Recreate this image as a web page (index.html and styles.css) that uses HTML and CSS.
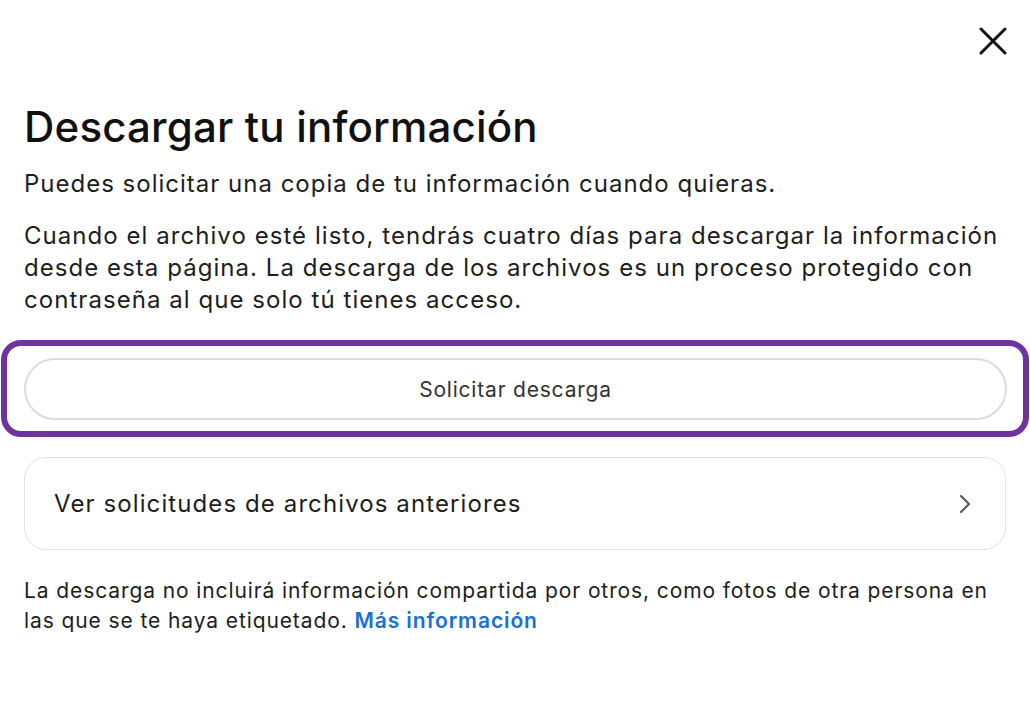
FILE: index.html
```html
<!DOCTYPE html>
<html lang="es">
<head>
<meta charset="utf-8">
<link rel="stylesheet" href="styles.css">
</head>
<body>
<div class="dialog">
  <div class="topbar">
    <button class="close" aria-label="Cerrar">
      <svg width="28" height="28" viewBox="0 0 28 28"><path d="M2 2 L26 26 M26 2 L2 26" stroke="#111" stroke-width="3" stroke-linecap="round" fill="none"/></svg>
    </button>
  </div>
  <h1 class="title">Descargar tu información</h1>
  <p class="lead">Puedes solicitar una copia de tu información cuando quieras.</p>
  <p class="body">Cuando el archivo esté listo, tendrás cuatro días para descargar la información desde esta página. La descarga de los archivos es un proceso protegido con contraseña al que solo tú tienes acceso.</p>
  <div class="highlight">
    <button class="pill">Solicitar descarga</button>
  </div>
  <div class="card">
    <span class="card-text">Ver solicitudes de archivos anteriores</span>
    <svg class="chev" width="14" height="22" viewBox="0 0 14 22"><path d="M3 3 L11 11 L3 19" stroke="#555" stroke-width="2" fill="none" stroke-linecap="round" stroke-linejoin="round"/></svg>
  </div>
  <p class="note">La descarga no incluirá información compartida por otros, como fotos de otra persona en las que se te haya etiquetado. <a class="link" href="#">Más información</a></p>
</div>
</body>
</html>
```
FILE: styles.css
```css
* { box-sizing: border-box; }
html, body { margin: 0; padding: 0; background: #fff; }
body {
  font-family: "Inter", "Noto Sans", sans-serif;
  color: #1c1e21;
}
.dialog {
  width: 1030px;
  height: 708px;
  padding: 0 24px;
  display: flex;
  flex-direction: column;
}
.topbar {
  display: flex;
  justify-content: flex-end;
  padding-top: 27px;
  margin-right: -1px;
}
.close {
  border: 0;
  background: none;
  padding: 0;
  width: 28px;
  height: 28px;
  display: flex;
  cursor: pointer;
}
.title {
  margin: 47px 0 0 0;
  font-size: 42px;
  font-weight: 500;
  line-height: 50px;
  letter-spacing: 0.2px;
  color: #111;
}
.lead {
  margin: 16px 0 0 0;
  font-size: 24px;
  line-height: 32px;
  letter-spacing: 1px;
}
.body {
  margin: 20px 0 0 0;
  font-size: 24px;
  line-height: 32px;
  letter-spacing: 1.05px;
}
.highlight {
  margin: 24px -23px 0 -23px;
  border: 6px solid #6f33a0;
  border-radius: 20px;
  padding: 12px 16px 11px 17px;
}
.pill {
  display: flex;
  align-items: center;
  justify-content: center;
  width: 100%;
  height: 62px;
  border: 2px solid #dcdcdc;
  border-radius: 31px;
  background: #fff;
  font-family: inherit;
  font-size: 21px;
  letter-spacing: 0.8px;
  color: #333;
}
.card {
  margin-top: 20px;
  height: 93px;
  border: 1.5px solid #e3e3e3;
  border-radius: 22px;
  display: flex;
  align-items: center;
  justify-content: space-between;
  padding: 0 33px 0 29px;
}
.card-text {
  font-size: 24px;
  letter-spacing: 1.1px;
  color: #1c1e21;
}
.note {
  margin: 26px 0 0 0;
  font-size: 21px;
  line-height: 30px;
  letter-spacing: 0.9px;
  color: #1c1e21;
}
.link {
  color: #1a6fd6;
  font-weight: 600;
  text-decoration: none;
}
```
